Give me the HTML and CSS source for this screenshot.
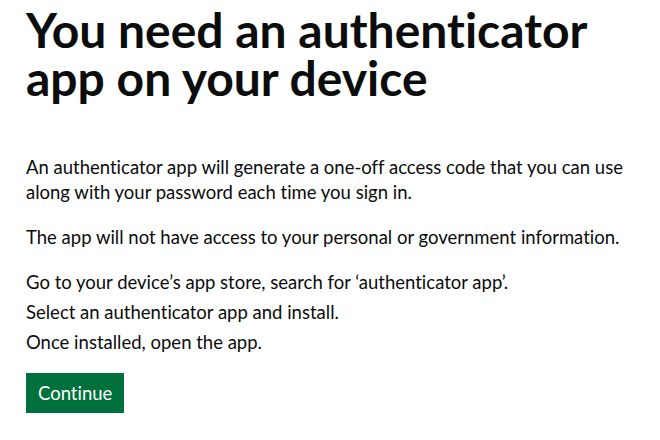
FILE: index.html
```html
<!DOCTYPE html>
<html lang="en">
<head>
  <meta charset="UTF-8" />
  <meta name="viewport" content="width=device-width, initial-scale=1.0"/>
  <title>You need an authenticator app on your device</title>
  <link rel="stylesheet" href="styles.css">
</head>
<body>
  <main class="page">
    <h1 class="heading-xl">You need an authenticator app on your device</h1>
    <p class="body">An authenticator app will generate a one-off access code that you can use along with your password each time you sign in.</p>
    <p class="body">The app will not have access to your personal or government information.</p>
    <ul class="list">
      <li>Go to your device’s app store, search for ‘authenticator app’.</li>
      <li>Select an authenticator app and install.</li>
      <li>Once installed, open the app.</li>
    </ul>
    <button class="button" type="submit">Continue</button>
  </main>
</body>
</html>
```

FILE: styles.css
```css
body {
  margin: 0;
  font-family: Lato, "Liberation Sans", sans-serif;
  font-variant-ligatures: none;
  color: #0b0c0c;
  background: white;
}
.page {
  padding: 0 26px;
}
.heading-xl {
  margin: 0 0 53px;
  padding-top: 6px;
  font-size: 48px;
  line-height: 48px;
  font-weight: 700;
}
.body {
  margin: 0 0 20px;
  font-size: 18.5px;
  line-height: 25px;
}
.list {
  margin: 0 0 18px;
  padding: 0;
  list-style: none;
  font-size: 18.5px;
  line-height: 25px;
}
.list li { margin-bottom: 5px; }
.button {
  font-family: inherit;
  font-variant-ligatures: none;
  font-size: 18.5px;
  line-height: 1;
  color: white;
  background: #00703c;
  border: 2px solid transparent;
  border-radius: 0;
  box-shadow: 0 2px 0 #002d18;
  padding: 9px 10px 8px;
  cursor: pointer;
}
```
